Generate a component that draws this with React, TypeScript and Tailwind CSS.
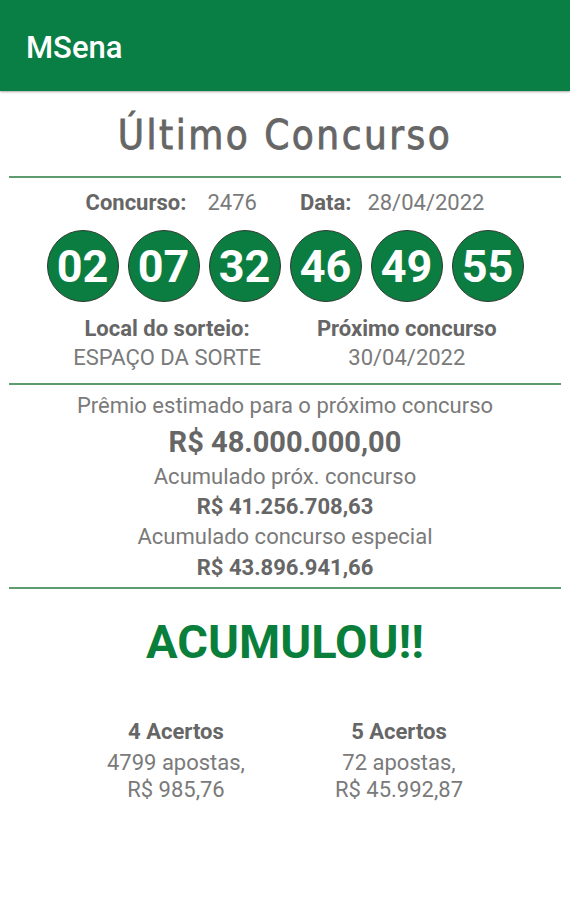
import React from "react";

const balls = ["02", "07", "32", "46", "49", "55"];

export default function App() {
  return (
    <div className="w-[570px] h-[900px] bg-white" style={{ fontFamily: "Roboto, 'Noto Sans', sans-serif" }}>
      <header className="h-[91px] bg-[#0a7f45] flex items-center pl-[26px] pt-[6px] shadow-[0_1px_2px_rgba(0,0,0,0.35)]">
        <span className="text-white text-[31px] font-medium">MSena</span>
      </header>
      <div className="px-[9px]">
        <h1
          className="text-center text-[#666666] text-[40px] font-normal leading-none pt-[24px] pb-[21px] tracking-[2.5px] [-webkit-text-stroke:0.8px_#666666]"
          style={{ fontFamily: "'DejaVu Sans Condensed', 'DejaVu Sans', sans-serif" }}
        >
          Último Concurso
        </h1>
        <div className="h-[2px] bg-[#5e9c70]" />
        <div className="flex justify-center gap-[43px] text-[22px] mt-[12px] leading-[26px]">
          <div className="flex gap-[21px]">
            <span className="font-bold text-[#666]">Concurso:</span>
            <span className="text-[#7a7a7a]">2476</span>
          </div>
          <div className="flex gap-[16px]">
            <span className="font-bold text-[#666]">Data:</span>
            <span className="text-[#7a7a7a]">28/04/2022</span>
          </div>
        </div>
        <div className="flex justify-center gap-[9px] mt-[14px]">
          {balls.map((b) => (
            <div
              key={b}
              className="w-[72px] h-[72px] rounded-full bg-[#0b7d40] border border-[#2b3a2f] flex items-center justify-center text-white font-bold text-[45px] leading-none"
            >
              {b}
            </div>
          ))}
        </div>
        <div className="flex justify-center gap-[56px] mt-[12px] text-[22px] leading-[29px]">
          <div className="flex flex-col items-center">
            <span className="font-bold text-[#666]">Local do sorteio:</span>
            <span className="text-[#7a7a7a]">ESPAÇO DA SORTE</span>
          </div>
          <div className="flex flex-col items-center">
            <span className="font-bold text-[#666]">Próximo concurso</span>
            <span className="text-[#7a7a7a]">30/04/2022</span>
          </div>
        </div>
        <div className="h-[2px] bg-[#5e9c70] mt-[11px]" />
        <div className="flex flex-col items-center text-[22px] pt-[6px] pb-[4px]">
          <span className="text-[#7a7a7a] leading-[30px]">Prêmio estimado para o próximo concurso</span>
          <span className="font-bold text-[#666] text-[29px] leading-[42px]">R$ 48.000.000,00</span>
          <span className="text-[#7a7a7a] leading-[28px]">Acumulado próx. concurso</span>
          <span className="font-bold text-[#666] leading-[31px]">R$ 41.256.708,63</span>
          <span className="text-[#7a7a7a] leading-[30px]">Acumulado concurso especial</span>
          <span className="font-bold text-[#666] leading-[31px]">R$ 43.896.941,66</span>
        </div>
        <div className="h-[2px] bg-[#5e9c70]" />
        <div className="text-center text-[#0a7f3c] font-bold text-[47px] leading-none mt-[29px]">ACUMULOU!!</div>
        <div className="flex justify-center gap-[90px] mt-[50px] text-[22px] leading-[27px]">
          <div className="flex flex-col items-center">
            <span className="font-bold text-[#666] leading-[34px]">4 Acertos</span>
            <span className="text-[#7a7a7a]">4799 apostas,</span>
            <span className="text-[#7a7a7a]">R$ 985,76</span>
          </div>
          <div className="flex flex-col items-center">
            <span className="font-bold text-[#666] leading-[34px]">5 Acertos</span>
            <span className="text-[#7a7a7a]">72 apostas,</span>
            <span className="text-[#7a7a7a]">R$ 45.992,87</span>
          </div>
        </div>
      </div>
    </div>
  );
}
